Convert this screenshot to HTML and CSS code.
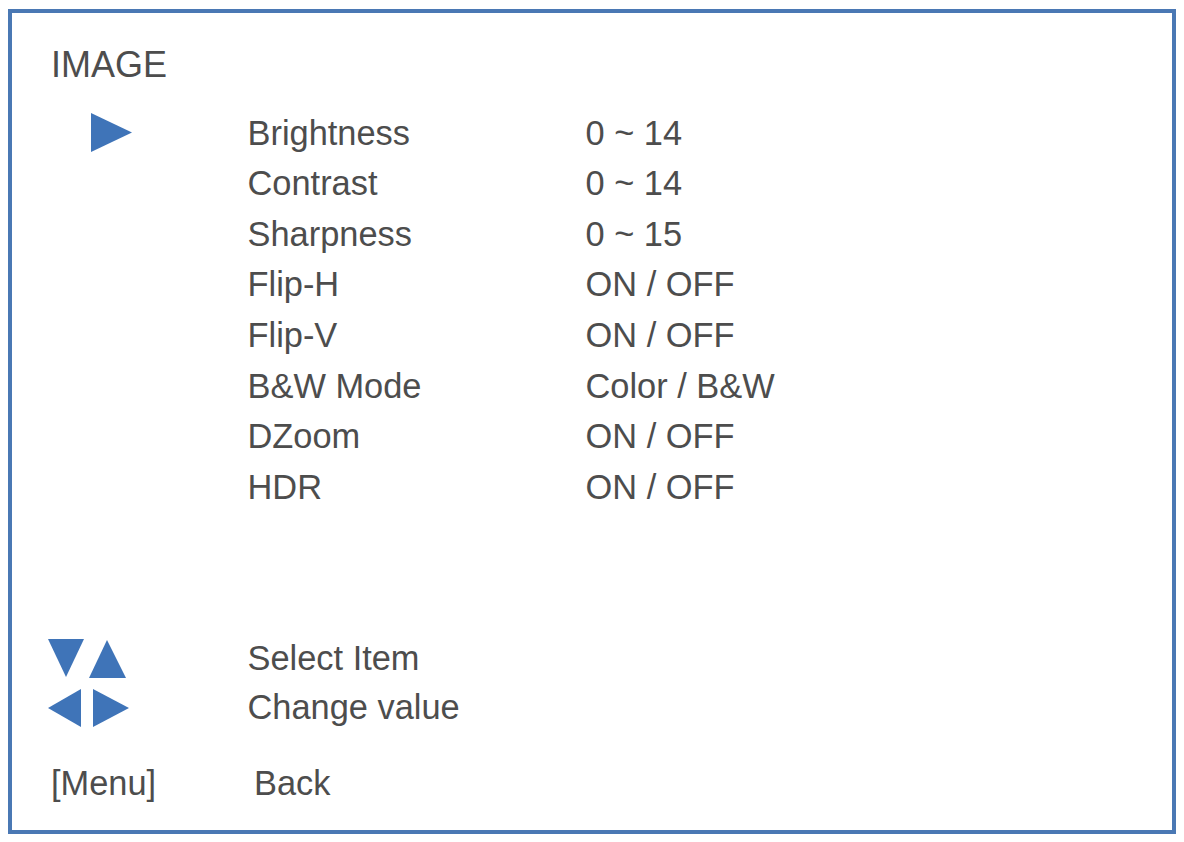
FILE: index.html
```html
<!DOCTYPE html>
<html>
<head>
<meta charset="utf-8">
<link rel="stylesheet" href="styles.css">
</head>
<body>
<div class="frame">
  <div class="title">IMAGE</div>
  <div class="menu">
    <div class="row">
      <div class="icon"><svg class="arrow" width="41" height="39" viewBox="0 0 41 39"><polygon points="0,0 41,19.5 0,39" /></svg></div>
      <div class="label">Brightness</div><div class="value">0 ~ 14</div>
    </div>
    <div class="row"><div class="icon"></div><div class="label">Contrast</div><div class="value">0 ~ 14</div></div>
    <div class="row"><div class="icon"></div><div class="label">Sharpness</div><div class="value">0 ~ 15</div></div>
    <div class="row"><div class="icon"></div><div class="label">Flip-H</div><div class="value">ON / OFF</div></div>
    <div class="row"><div class="icon"></div><div class="label">Flip-V</div><div class="value">ON / OFF</div></div>
    <div class="row"><div class="icon"></div><div class="label">B&amp;W Mode</div><div class="value">Color / B&amp;W</div></div>
    <div class="row"><div class="icon"></div><div class="label">DZoom</div><div class="value">ON / OFF</div></div>
    <div class="row"><div class="icon"></div><div class="label">HDR</div><div class="value">ON / OFF</div></div>
  </div>
  <div class="hints">
    <div class="hrow">
      <div class="icon">
        <svg class="hint-icon" width="80" height="39" viewBox="0 0 80 39"><polygon points="0,0 36,0 18,38" /><polygon points="41,39 59,1 78,39" /></svg>
      </div>
      <div class="label">Select Item</div>
    </div>
    <div class="hrow">
      <div class="icon">
        <svg class="hint-icon" width="82" height="38" viewBox="0 0 82 38"><polygon points="0,19 33,0 33,38" /><polygon points="45,0 81,19 45,38" /></svg>
      </div>
      <div class="label">Change value</div>
    </div>
  </div>
  <div class="footer">
    <div class="key">[Menu]</div>
    <div class="action">Back</div>
  </div>
</div>
</body>
</html>
```
FILE: styles.css
```css
html, body {
  margin: 0;
  padding: 0;
  background: #ffffff;
}
body {
  font-family: "Liberation Sans", Arial, sans-serif;
  color: #4d4d4d;
}
.frame {
  box-sizing: border-box;
  width: 1168px;
  height: 825px;
  margin: 9px 0 0 8px;
  border: 4px solid #4a78b4;
  padding: 32px 0 0 39px;
}
.title {
  font-size: 36px;
  line-height: 40px;
  height: 40px;
}
.menu {
  margin-top: 22.7px;
}
.row, .hrow {
  display: grid;
  grid-template-columns: 196.5px 338px auto;
  align-items: center;
  font-size: 34.4px;
}
.row {
  height: 50.6px;
  line-height: 50.6px;
}
.icon {
  display: flex;
  align-items: center;
  height: 100%;
}
.arrow {
  margin-left: 40px;
}
.hint-icon {
  margin-left: -3px;
}
svg polygon {
  fill: #3f74b8;
}
.hints {
  margin-top: 122px;
}
.hrow {
  height: 49px;
  line-height: 49px;
}
.footer {
  display: grid;
  grid-template-columns: 203px auto;
  font-size: 34.4px;
  height: 50px;
  line-height: 50px;
  margin-top: 26px;
}
```
